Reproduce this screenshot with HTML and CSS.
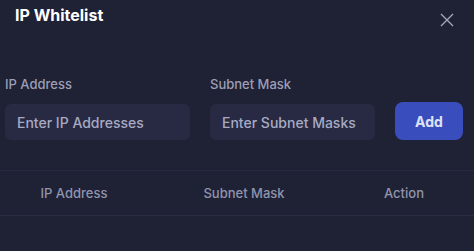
FILE: index.html
```html
<!DOCTYPE html>
<html>
<head>
<meta charset="utf-8">
<link rel="stylesheet" href="styles.css">
</head>
<body>
<div class="modal">
  <div class="header">
    <h1 class="title">IP Whitelist</h1>
    <button class="close" aria-label="Close">
      <svg width="14" height="14" viewBox="0 0 14 14"><path d="M1 1L13 13M13 1L1 13" stroke="#a3a5b8" stroke-width="1.4" fill="none"/></svg>
    </button>
  </div>
  <div class="form">
    <div class="field ip">
      <label class="label">IP Address</label>
      <input class="input" placeholder="Enter IP Addresses">
    </div>
    <div class="field mask">
      <label class="label">Subnet Mask</label>
      <input class="input" placeholder="Enter Subnet Masks">
    </div>
    <button class="add">Add</button>
  </div>
  <div class="table">
    <div class="th c1">IP Address</div>
    <div class="th c2">Subnet Mask</div>
    <div class="th c3">Action</div>
  </div>
</div>
</body>
</html>
```
FILE: styles.css
```css
html, body {
  margin: 0;
  padding: 0;
  background: #1f2135;
  width: 474px;
  height: 251px;
  overflow: hidden;
  font-family: "Inter", "Open Sans", "Liberation Sans", sans-serif;
}
.modal {
  display: flex;
  flex-direction: column;
}
.header {
  display: flex;
  justify-content: space-between;
  align-items: flex-start;
  padding: 5px 20px 0 15px;
  height: 52px;
}
.title {
  margin: 0;
  color: #ffffff;
  font-size: 16px;
  font-weight: 700;
  line-height: 20px;
}
.close {
  margin-top: 8px;
  background: none;
  border: 0;
  padding: 0;
  width: 14px;
  height: 14px;
  display: flex;
}
.form {
  display: flex;
  align-items: flex-end;
  padding: 19px 11px 0 5px;
}
.field {
  display: flex;
  flex-direction: column;
  gap: 12px;
}
.ip { width: 185px; margin-right: 20px; }
.mask { width: 165px; margin-right: 20px; }
.label {
  color: #9c9eb6;
  font-size: 13px;
  font-weight: 500;
  line-height: 16px;
}
.input {
  box-sizing: border-box;
  height: 36px;
  width: 100%;
  border: 0;
  border-radius: 6px;
  background: #272a42;
  padding: 0 12px;
  font-family: inherit;
  font-size: 14px;
  font-weight: 500;
  color: #fff;
  outline: none;
}
.input::placeholder { color: #a8aac3; }
.add {
  width: 68px;
  height: 38px;
  margin-bottom: 0;
  border: 0;
  border-radius: 8px;
  background: #3a4dbd;
  color: #dfe2f7;
  font-family: inherit;
  font-size: 14px;
  font-weight: 700;
}
.table {
  margin-top: 30px;
  display: grid;
  grid-template-columns: 148px 192px 128px;
  border-top: 1px solid #272a40;
  border-bottom: 1px solid #2a2d44;
  height: 44px;
  align-items: center;
}
.th {
  text-align: center;
  color: #9194ad;
  font-size: 13px;
  font-weight: 500;
}
```
